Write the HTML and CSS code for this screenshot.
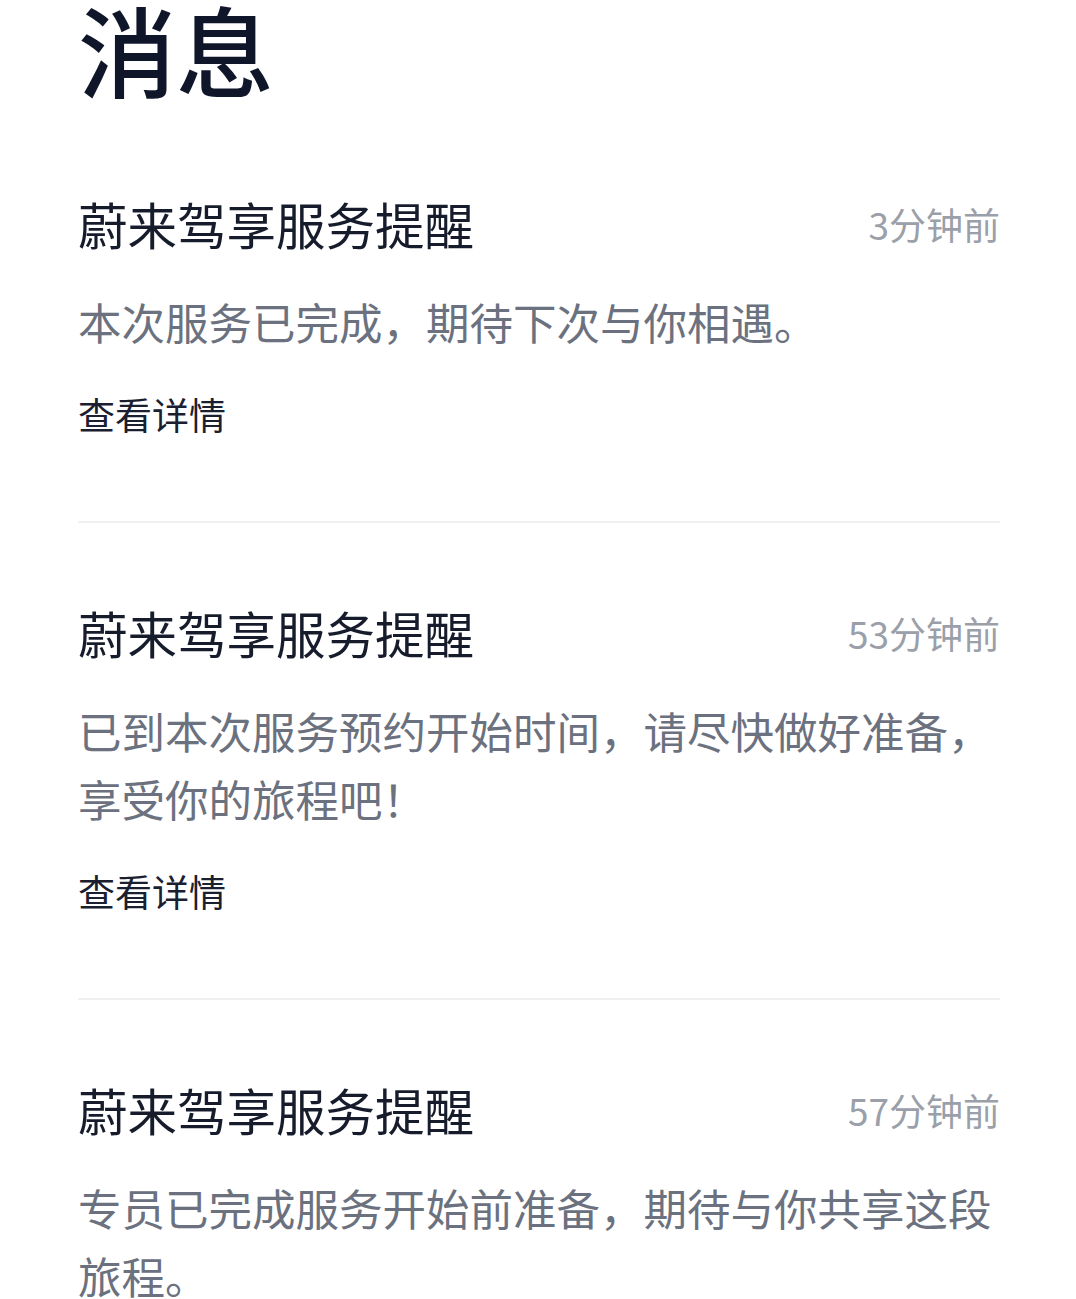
FILE: index.html
```html
<!DOCTYPE html>
<html lang="zh-CN">
<head>
<meta charset="utf-8">
<title>消息</title>
<link rel="stylesheet" href="styles.css">
</head>
<body>
<div class="page">
  <h1 class="kopf">消息</h1>

  <div class="liste">
    <div class="nachricht">
      <div class="zeile">
        <span class="titel">蔚来驾享服务提醒</span>
        <span class="zeit">3分钟前</span>
      </div>
      <p class="text">本次服务已完成，期待下次与你相遇。</p>
      <a class="mehr">查看详情</a>
    </div>

    <div class="nachricht">
      <div class="zeile">
        <span class="titel">蔚来驾享服务提醒</span>
        <span class="zeit">53分钟前</span>
      </div>
      <p class="text">已到本次服务预约开始时间，请尽快做好准备，享受你的旅程吧！</p>
      <a class="mehr">查看详情</a>
    </div>

    <div class="nachricht">
      <div class="zeile">
        <span class="titel">蔚来驾享服务提醒</span>
        <span class="zeit">57分钟前</span>
      </div>
      <p class="text">专员已完成服务开始前准备，期待与你共享这段旅程。</p>
      <a class="mehr">查看详情</a>
    </div>
  </div>
</div>
</body>
</html>
```

FILE: styles.css
```css
body { margin:0; background:#fff; font-family:"Noto Sans CJK SC","Noto Sans",sans-serif; }
.page { padding:2px 76px 0 78px; }
.kopf { margin:-4px 0 0 0; font-size:98px; line-height:98px; font-weight:500; color:#0f1629; }
.liste { margin-top:102px; display:flex; flex-direction:column; }
.nachricht { padding:0 0 82px 0; border-bottom:2px solid #eef0f2; margin-bottom:84px; }
.zeile { display:flex; justify-content:space-between; align-items:center; height:60px; margin-top:-4px; }
.titel { font-size:49.5px; line-height:60px; color:#161c2b; }
.zeit { font-size:37px; line-height:60px; color:#9a9fa9; }
.text { margin:34px 0 0 0; font-size:43.5px; line-height:68px; color:#6b717e; }
.mehr { display:block; margin-top:33px; font-size:37px; line-height:50px; color:#1a2030; }
```
